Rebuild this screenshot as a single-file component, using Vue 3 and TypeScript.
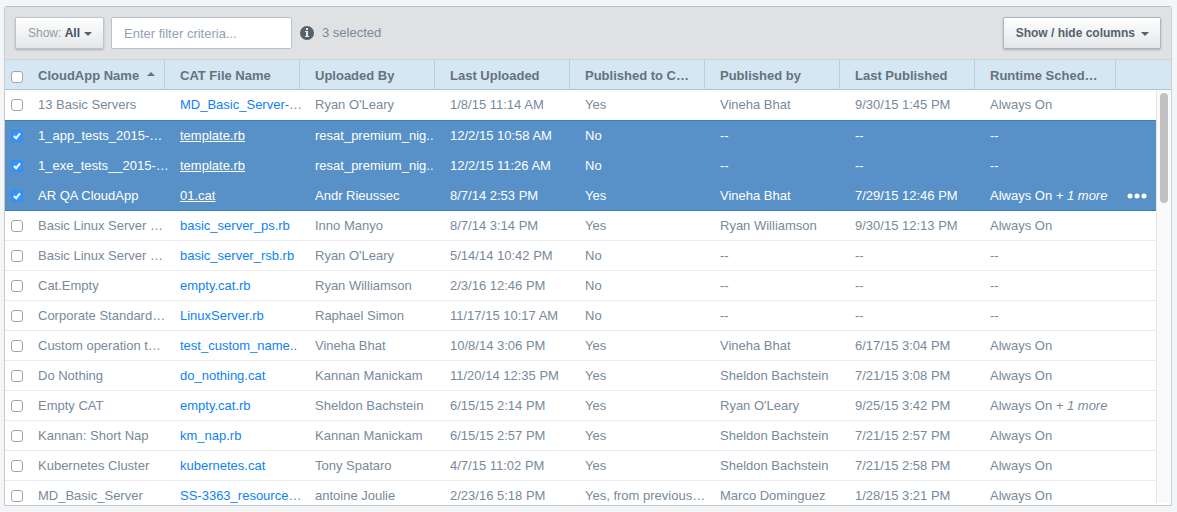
<script setup lang="ts">
import { computed, ref } from 'vue'

interface CloudApp {
  id: number
  checked: boolean
  name: string
  file: string
  clipped?: boolean
  uploadedBy: string
  uploaded: string
  published: string
  publishedBy: string
  lastPublished: string
  schedule: string
  more?: string
  actions?: boolean
}

const columns: string[] = [
  'CloudApp Name',
  'CAT File Name',
  'Uploaded By',
  'Last Uploaded',
  'Published to C…',
  'Published by',
  'Last Published',
  'Runtime Sched…',
]

const filter = ref('')

const apps = ref<CloudApp[]>([
  { id: 1, checked: false, name: '13 Basic Servers', file: 'MD_Basic_Server-', clipped: true, uploadedBy: "Ryan O'Leary", uploaded: '1/8/15 11:14 AM', published: 'Yes', publishedBy: 'Vineha Bhat', lastPublished: '9/30/15 1:45 PM', schedule: 'Always On' },
  { id: 2, checked: true, name: '1_app_tests_2015-…', file: 'template.rb', uploadedBy: 'resat_premium_nig..', uploaded: '12/2/15 10:58 AM', published: 'No', publishedBy: '--', lastPublished: '--', schedule: '--' },
  { id: 3, checked: true, name: '1_exe_tests__2015-…', file: 'template.rb', uploadedBy: 'resat_premium_nig..', uploaded: '12/2/15 11:26 AM', published: 'No', publishedBy: '--', lastPublished: '--', schedule: '--' },
  { id: 4, checked: true, name: 'AR QA CloudApp', file: '01.cat', uploadedBy: 'Andr Rieussec', uploaded: '8/7/14 2:53 PM', published: 'Yes', publishedBy: 'Vineha Bhat', lastPublished: '7/29/15 12:46 PM', schedule: 'Always On', more: '+ 1 more', actions: true },
  { id: 5, checked: false, name: 'Basic Linux Server …', file: 'basic_server_ps.rb', uploadedBy: 'Inno Manyo', uploaded: '8/7/14 3:14 PM', published: 'Yes', publishedBy: 'Ryan Williamson', lastPublished: '9/30/15 12:13 PM', schedule: 'Always On' },
  { id: 6, checked: false, name: 'Basic Linux Server …', file: 'basic_server_rsb.rb', uploadedBy: "Ryan O'Leary", uploaded: '5/14/14 10:42 PM', published: 'No', publishedBy: '--', lastPublished: '--', schedule: '--' },
  { id: 7, checked: false, name: 'Cat.Empty', file: 'empty.cat.rb', uploadedBy: 'Ryan Williamson', uploaded: '2/3/16 12:46 PM', published: 'No', publishedBy: '--', lastPublished: '--', schedule: '--' },
  { id: 8, checked: false, name: 'Corporate Standard…', file: 'LinuxServer.rb', uploadedBy: 'Raphael Simon', uploaded: '11/17/15 10:17 AM', published: 'No', publishedBy: '--', lastPublished: '--', schedule: '--' },
  { id: 9, checked: false, name: 'Custom operation t…', file: 'test_custom_name..', uploadedBy: 'Vineha Bhat', uploaded: '10/8/14 3:06 PM', published: 'Yes', publishedBy: 'Vineha Bhat', lastPublished: '6/17/15 3:04 PM', schedule: 'Always On' },
  { id: 10, checked: false, name: 'Do Nothing', file: 'do_nothing.cat', uploadedBy: 'Kannan Manickam', uploaded: '11/20/14 12:35 PM', published: 'Yes', publishedBy: 'Sheldon Bachstein', lastPublished: '7/21/15 3:08 PM', schedule: 'Always On' },
  { id: 11, checked: false, name: 'Empty CAT', file: 'empty.cat.rb', uploadedBy: 'Sheldon Bachstein', uploaded: '6/15/15 2:14 PM', published: 'Yes', publishedBy: "Ryan O'Leary", lastPublished: '9/25/15 3:42 PM', schedule: 'Always On', more: '+ 1 more' },
  { id: 12, checked: false, name: 'Kannan: Short Nap', file: 'km_nap.rb', uploadedBy: 'Kannan Manickam', uploaded: '6/15/15 2:57 PM', published: 'Yes', publishedBy: 'Sheldon Bachstein', lastPublished: '7/21/15 2:57 PM', schedule: 'Always On' },
  { id: 13, checked: false, name: 'Kubernetes Cluster', file: 'kubernetes.cat', uploadedBy: 'Tony Spataro', uploaded: '4/7/15 11:02 PM', published: 'Yes', publishedBy: 'Sheldon Bachstein', lastPublished: '7/21/15 2:58 PM', schedule: 'Always On' },
  { id: 14, checked: false, name: 'MD_Basic_Server', file: 'SS-3363_resource', clipped: true, uploadedBy: 'antoine Joulie', uploaded: '2/23/16 5:18 PM', published: 'Yes, from previous…', publishedBy: 'Marco Dominguez', lastPublished: '1/28/15 3:21 PM', schedule: 'Always On' },
])

const selectedCount = computed(() => apps.value.filter((a) => a.checked).length)

const allChecked = computed({
  get: () => apps.value.every((a) => a.checked),
  set: (value: boolean) => apps.value.forEach((a) => (a.checked = value)),
})

// The darker rule is drawn only where a selected block begins and ends.
function isEdge(index: number): boolean {
  const next = apps.value[index + 1]
  return next !== undefined && next.checked !== apps.value[index].checked
}
</script>

<template>
  <main class="page">
    <section class="panel">
      <div class="toolbar">
        <button type="button" class="btn show" aria-haspopup="true">
          <span class="soft">Show: <b>All</b></span><i class="caret"></i>
        </button>
        <input v-model="filter" class="filter" type="text" aria-label="Filter" placeholder="Enter filter criteria..." />
        <svg class="info" viewBox="0 0 14 14" aria-hidden="true">
          <circle cx="7" cy="7" r="7" fill="#55636e" />
          <path d="M6 2h2v2H6zM5 5h3v5h1v1H5v-1h1V6H5z" fill="#e6e8ea" />
        </svg>
        <span class="count">{{ selectedCount }} selected</span>
        <button type="button" class="btn columns" aria-haspopup="true">
          Show / hide columns<i class="caret"></i>
        </button>
      </div>

      <div class="grid">
        <table>
          <colgroup>
            <col class="c-check" />
            <col class="c-name" />
            <col v-for="n in 6" :key="n" class="c-data" />
            <col class="c-schedule" />
            <col class="c-actions" />
          </colgroup>
          <thead>
            <tr>
              <th class="check"><input v-model="allChecked" type="checkbox" aria-label="Select all" /></th>
              <th v-for="(column, i) in columns" :key="column" scope="col" class="head">
                {{ column }}<i v-if="i === 0" class="sort"></i>
              </th>
              <th class="tail"></th>
            </tr>
          </thead>
          <tbody>
            <tr v-for="(app, i) in apps" :key="app.id" :class="{ selected: app.checked, edge: isEdge(i) }">
              <td class="check"><input v-model="app.checked" type="checkbox" :aria-label="'Select ' + app.name" /></td>
              <td>{{ app.name }}</td>
              <td><a href="#">{{ app.file }}</a><template v-if="app.clipped">…</template></td>
              <td>{{ app.uploadedBy }}</td>
              <td>{{ app.uploaded }}</td>
              <td>{{ app.published }}</td>
              <td>{{ app.publishedBy }}</td>
              <td>{{ app.lastPublished }}</td>
              <td>{{ app.schedule }}<em v-if="app.more">&nbsp;{{ app.more }}</em></td>
              <td class="actions">
                <button v-if="app.actions" type="button" class="dots" aria-label="More actions">
                  <svg viewBox="0 0 20 6" aria-hidden="true">
                    <circle cx="3" cy="3" r="2.5" />
                    <circle cx="10" cy="3" r="2.5" />
                    <circle cx="17" cy="3" r="2.5" />
                  </svg>
                </button>
              </td>
            </tr>
          </tbody>
        </table>
        <div class="track" aria-hidden="true"><div class="thumb"></div></div>
      </div>
    </section>
  </main>
</template>

<style>
body {
  background: #f3f5f7;
}
</style>

<style scoped>
.page {
  box-sizing: border-box;
  height: 100vh;
  padding: 6px 5px 6px 4px;
  font-family: "Liberation Sans", Arial, sans-serif;
  font-size: 13px;
  line-height: 16px;
  color: #788a9b;
}
.panel {
  box-sizing: border-box;
  height: 100%;
  display: flex;
  flex-direction: column;
  overflow: hidden;
  border: 1px solid;
  border-color: #b4c0cb #cbd0d9 #c5cad4 #c5ccd5;
  border-radius: 3px 3px 0 0;
  background: #fff;
}
.toolbar {
  display: flex;
  align-items: center;
  padding: 10px;
  border-bottom: 1px solid #cad3da;
  background: #dfe1e3;
}
.btn {
  height: 32px;
  box-sizing: border-box;
  display: flex;
  align-items: center;
  padding: 0 11px 0 12px;
  border: 1px solid #bdc4cb;
  border-radius: 2px;
  background: linear-gradient(#fff, #e4e6e8);
  box-shadow: 0 1px 2px rgba(90, 100, 115, 0.4);
  font: bold 12px/16px "Liberation Sans", Arial, sans-serif;
  color: #55626e;
  white-space: nowrap;
}
.btn.columns {
  margin-left: auto;
  border-color: #a9b5c2;
}
.soft {
  font-weight: normal;
  color: #929ba3;
}
.soft b {
  color: #44505c;
}
.caret {
  margin: 2px 0 0 4px;
  border: 4px solid transparent;
  border-top-color: #55626e;
  border-bottom: 0;
}
.columns .caret {
  margin-left: 6px;
}
.filter {
  box-sizing: border-box;
  width: 181px;
  height: 32px;
  margin: 0 8px 0 7px;
  padding: 0 12px;
  border: 1px solid #b7c2cf;
  border-radius: 2px;
  background: #fff;
  font: 13px/16px "Liberation Sans", Arial, sans-serif;
  color: #55626e;
}
.filter::placeholder {
  color: #93a2b2;
  opacity: 1;
}
.info {
  width: 14px;
  height: 14px;
  margin-right: 8px;
}
.grid {
  position: relative;
  flex: 1;
  min-height: 0;
  overflow: hidden;
}
table {
  width: 100%;
  table-layout: fixed;
  border-collapse: separate;
  border-spacing: 0;
}
.c-check { width: 18px; }
.c-name { width: 142px; }
.c-data { width: 135px; }
.c-schedule { width: 141px; }
.c-actions { width: 55px; }
th,
td {
  box-sizing: border-box;
  height: 30px;
  padding: 0 0 0 15px;
  text-align: left;
  vertical-align: middle;
  white-space: nowrap;
}
th {
  padding-top: 2px;
  border-bottom: 1px solid #b4c3cf;
  background: #d5e7f3;
  color: #65737f;
}
th.head {
  border-right: 1px solid #bccfdc;
}
td {
  border-bottom: 1px solid #e8eaf0;
}
tbody tr:first-child td {
  height: 31px;
}
th.check,
td.check {
  padding: 0 0 0 6px;
}
th.check {
  padding-top: 4px;
}
input[type="checkbox"] {
  appearance: none;
  box-sizing: border-box;
  display: block;
  width: 12px;
  height: 12px;
  margin: 0;
  border: 1px solid #a5a5a5;
  border-radius: 3px;
  background: #fff;
}
input[type="checkbox"]:checked {
  border-color: #2f8df5;
  background: #3394fd;
}
input[type="checkbox"]:checked::after {
  content: "";
  display: block;
  box-sizing: border-box;
  width: 4px;
  height: 7px;
  margin: 1px auto 0;
  border: solid #fff;
  border-width: 0 2px 2px 0;
  transform: rotate(40deg);
}
.sort {
  display: inline-block;
  margin-left: 8px;
  vertical-align: 4px;
  border: 4px solid transparent;
  border-bottom-color: #65737f;
  border-top: 0;
}
a {
  color: #0f82f5;
  text-decoration: none;
}
.selected td {
  border-bottom-color: #5791c8;
  background: #5791c8;
  color: #fff;
}
.edge td,
.selected.edge td {
  border-bottom-color: #3b7ebf;
}
.selected a {
  color: #fff;
  text-decoration: underline;
}
td.actions {
  padding-left: 11px;
}
.dots {
  display: block;
  padding: 0;
  border: 0;
  background: none;
}
.dots svg {
  display: block;
  width: 20px;
  height: 6px;
  fill: #fff;
}
.track {
  position: absolute;
  top: 30px;
  right: 0;
  bottom: 2px;
  box-sizing: border-box;
  width: 15px;
  padding: 3px;
  border-left: 1px solid #e6e6e8;
  background: #fafafa;
}
.thumb {
  width: 8px;
  height: 110px;
  border-radius: 4px;
  background: #c1c1c1;
}
</style>
